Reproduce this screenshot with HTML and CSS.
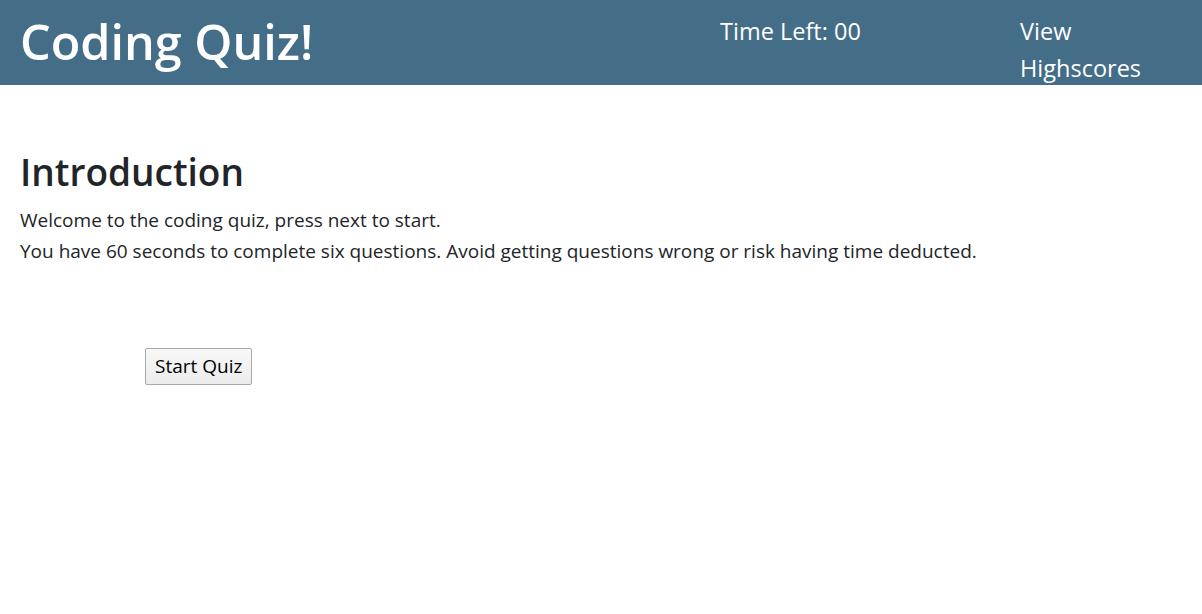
FILE: index.html
```html
<!DOCTYPE html>
<html>
<head>
<meta charset="utf-8">
<link rel="stylesheet" href="styles.css">
</head>
<body>
<header class="topbar">
  <h1 class="title">Coding Quiz!</h1>
  <div class="timer">Time Left: 00</div>
  <a class="scores" href="#">View Highscores</a>
</header>
<main class="intro">
  <h2 class="intro-title">Introduction</h2>
  <p class="intro-text">Welcome to the coding quiz, press next to start.<br>You have 60 seconds to complete six questions. Avoid getting questions wrong or risk having time deducted.</p>
  <div class="actions">
    <button class="start">Start Quiz</button>
  </div>
</main>
</body>
</html>
```

FILE: styles.css
```css
* { box-sizing: border-box; }
body {
  margin: 0;
  font-family: "Open Sans", "Noto Sans", sans-serif;
  color: #212529;
  background: #fff;
}
.topbar {
  display: flex;
  align-items: flex-start;
  height: 85px;
  background: #446d87;
  color: #fff;
  padding-left: 20px;
}
.title {
  margin: 12px 0 0;
  font-size: 48.5px;
  font-weight: 600;
  line-height: 1.2;
  width: 700px;
}
.timer {
  margin-top: 13px;
  font-size: 23.5px;
  line-height: 37px;
  width: 300px;
}
.scores {
  margin-top: 13px;
  font-size: 23.5px;
  line-height: 37px;
  width: 140px;
  color: #fff;
  text-decoration: none;
}
.intro {
  padding: 65px 20px 0;
}
.intro-title {
  margin: 0 0 11px;
  font-size: 37px;
  font-weight: 600;
  line-height: 1.2;
}
.intro-text {
  margin: 0;
  font-size: 19px;
  line-height: 31px;
}
.actions {
  padding: 81px 0 0 125px;
}
.start {
  font-family: inherit;
  font-size: 19px;
  line-height: 25px;
  padding: 5px 9px;
  border: 1px solid #a8a8a8;
  border-radius: 2px;
  background: linear-gradient(#f8f8f8, #ececec);
  color: #000;
}
```
